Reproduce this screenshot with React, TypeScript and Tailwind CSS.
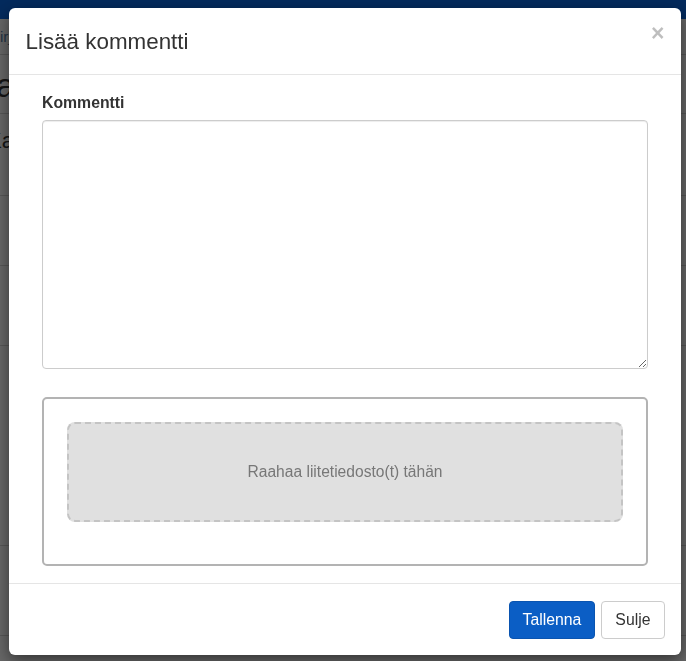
import { ReactNode } from "react";

export default function App() {
  return (
    <div className="relative h-[661px] overflow-hidden bg-white font-['Liberation_Sans',Arial,sans-serif] text-[#333]">
      <BackgroundPage />
      <div className="fixed inset-0 bg-black/60">
        <CommentModal />
      </div>
    </div>
  );
}

function BackgroundPage() {
  return (
    <div>
      <div className="h-[19px] bg-[#0869e6]" />
      <Row className="h-[36px] pt-[6px]">
        <span className="-ml-[10px] text-[15px] text-[#5a7fa8]">Kirjaukset</span>
      </Row>
      <Row className="h-[59px] pt-[10px]">
        <h2 className="-ml-[21px] text-[34px] leading-[40px]">Tapahtumat</h2>
      </Row>
      <Row className="h-[82px] pt-[10px]">
        <span className="-ml-[13px] text-[22px]">Kaikki</span>
      </Row>
      <Row className="h-[70px]" />
      <Row className="h-[80px]" />
      <Row className="h-[200px]" />
      <Row className="h-[90px]" />
    </div>
  );
}

function Row({ className, children }: { className: string; children?: ReactNode }) {
  return <div className={`border-b border-[#d6d6d6] ${className}`}>{children}</div>;
}

function CommentModal() {
  return (
    <div className="ml-[9px] mt-[8px] w-[672px] rounded-[6px] bg-white shadow-[0_5px_15px_rgba(0,0,0,0.5)]">
      {/* header */}
      <div className="flex items-start justify-between border-b border-[#e5e5e5] p-[16.5px]">
        <h4 className="text-[22.4px] leading-[33px] text-[#333]">Lisää kommentti</h4>
        <button className="-mt-[3px] text-[23px] font-bold leading-none text-black opacity-25">
          ×
        </button>
      </div>

      {/* body */}
      <div className="px-[33px] pt-[17px] pb-[17px]">
        <label className="mb-[6px] block text-[15.8px] font-bold leading-[22px] text-[#333]">
          Kommentti
        </label>
        <textarea className="block h-[249px] w-full resize-y rounded-[4px] border border-[#ccc] shadow-[inset_0_1px_1px_rgba(0,0,0,0.075)] outline-none" />

        <div className="mt-[28px] rounded-[5px] border-2 border-[#b3b3b3] px-[23px] pt-[23px] pb-[42px]">
          <div className="flex h-[100px] items-center justify-center rounded-[8px] border-2 border-dashed border-[#c4c4c4] bg-[#e0e0e0] text-[15.6px] text-[#777]">
            Raahaa liitetiedosto(t) tähän
          </div>
        </div>
      </div>

      {/* footer */}
      <div className="flex justify-end gap-[6px] border-t border-[#e5e5e5] p-[16.5px]">
        <button className="h-[38px] rounded-[4px] border border-[#0a54b0] bg-[#0b5ec5] px-[13px] text-[15.8px] text-white">
          Tallenna
        </button>
        <button className="h-[38px] rounded-[4px] border border-[#ccc] bg-white px-[13px] text-[15.8px] text-[#333]">
          Sulje
        </button>
      </div>
    </div>
  );
}
